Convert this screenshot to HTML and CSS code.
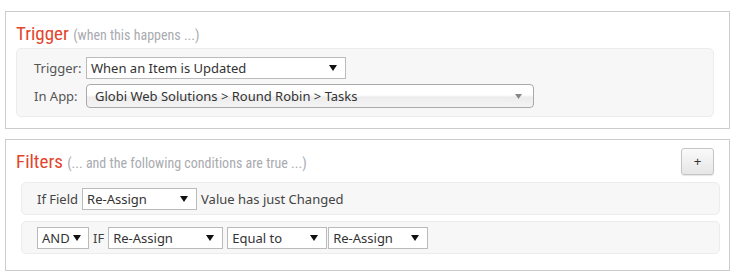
FILE: index.html
```html
<!DOCTYPE html>
<html lang="en">
  <head>
    <meta charset="UTF-8" />
    <title>Trigger and Filters</title>
    <link rel="stylesheet" href="styles.css">
  </head>
  <body>
    <div class="panel">
      <h2 class="panel-title">Trigger <small>(when this happens ...)</small></h2>
      <div class="trigger-box">
        <span class="label">Trigger:</span>
        <div class="select select-trigger">
          <span>When an Item is Updated</span>
          <svg class="caret" width="8" height="6" viewBox="0 0 8 6"><path d="M0 0h8L4 6z" /></svg>
        </div>
        <span class="label">In App:</span>
        <div class="select select-app">
          <span>Globi Web Solutions &gt; Round Robin &gt; Tasks</span>
          <svg class="caret caret-grey" width="7" height="5" viewBox="0 0 7 5"><path d="M0 0h7L3.5 5z" /></svg>
        </div>
      </div>
    </div>

    <div class="panel panel-filters">
      <div class="panel-head">
        <h2 class="panel-title">Filters <small>(... and the following conditions are true ...)</small></h2>
        <button class="btn-add">+</button>
      </div>
      <div class="filter-row">
        <span class="word">If Field</span>
        <div class="select select-field">
          <span>Re-Assign</span>
          <svg class="caret" width="8" height="6" viewBox="0 0 8 6"><path d="M0 0h8L4 6z" /></svg>
        </div>
        <span class="word">Value has just Changed</span>
      </div>
      <div class="filter-row">
        <div class="select select-and">
          <span>AND</span>
          <svg class="caret" width="8" height="6" viewBox="0 0 8 6"><path d="M0 0h8L4 6z" /></svg>
        </div>
        <span class="word">IF</span>
        <div class="select select-field">
          <span>Re-Assign</span>
          <svg class="caret" width="8" height="6" viewBox="0 0 8 6"><path d="M0 0h8L4 6z" /></svg>
        </div>
        <div class="select select-op">
          <span>Equal to</span>
          <svg class="caret" width="8" height="6" viewBox="0 0 8 6"><path d="M0 0h8L4 6z" /></svg>
        </div>
        <div class="select select-value">
          <span>Re-Assign</span>
          <svg class="caret" width="8" height="6" viewBox="0 0 8 6"><path d="M0 0h8L4 6z" /></svg>
        </div>
      </div>
    </div>
  </body>
</html>
```

FILE: styles.css
```css
* {
  box-sizing: border-box;
}

body {
  margin: 0;
  padding: 11px 0 0 5px;
  font-family: "Noto Sans", "Open Sans", sans-serif;
  font-size: 13px;
  color: #444;
  background: #fff;
}

.panel {
  width: 725px;
  height: 118px;
  border: 1px solid #ccc;
  padding: 0 15px 0 10px;
}

.panel-filters {
  margin-top: 10px;
  height: 132px;
}

.panel-title {
  margin: 0;
  padding: 10px 0 1px 0;
  font-family: "Liberation Sans Narrow", "Roboto Condensed", Roboto, sans-serif;
  font-weight: normal;
  font-size: 19px;
  line-height: 24px;
  color: #e3452b;
}

.panel-title small {
  font-size: 14px;
  color: #a9abb0;
}

.trigger-box {
  display: grid;
  grid-template-columns: 52px auto;
  justify-items: start;
  align-items: center;
  row-gap: 5px;
  background: #f7f7f7;
  border: 1px solid #ececec;
  border-radius: 5px;
  padding: 8px 0 8px 17px;
}

.label {
  color: #555;
}

.select {
  display: flex;
  align-items: center;
  justify-content: space-between;
  height: 22px;
  padding: 0 8px 0 4px;
  background: #fff;
  border: 1px solid #bbb;
  color: #333;
  white-space: nowrap;
}

.caret {
  fill: #111;
  flex: none;
}

.caret-grey {
  fill: #888;
}

.select-trigger {
  width: 260px;
}

.select-app {
  width: 448px;
  height: 24px;
  padding: 0 11px 0 8px;
  border: 1px solid #aaa;
  border-radius: 4px;
  background: linear-gradient(#fff 0%, #fff 45%, #ececec 55%, #f4f4f4 100%);
}

.panel-head {
  display: flex;
  justify-content: space-between;
  align-items: flex-start;
}

.panel-filters .panel-title {
  padding: 10px 0 0 0;
}

.btn-add {
  margin-top: 8px;
  width: 33px;
  height: 27px;
  border: 1px solid #c4c4c4;
  border-radius: 3px;
  background: linear-gradient(#fafafa, #e6e6e6);
  box-shadow: 0 1px 1px rgba(0, 0, 0, 0.1);
  font-size: 13px;
  color: #333;
  padding: 0;
}

.filter-row {
  display: flex;
  align-items: center;
  width: 699px;
  margin: 0 0 6px 5px;
  height: 33px;
  padding: 0 15px;
  background: #f7f7f7;
  border: 1px solid #ececec;
  border-radius: 5px;
}

.panel-head + .filter-row {
  margin-top: 7px;
}

.word {
  margin-right: 4px;
}

.select + .word {
  margin-left: 4px;
}

.select-field {
  width: 115px;
}

.select-and {
  width: 52px;
  padding-right: 7px;
}

.select-op,
.select-value {
  width: 100px;
}

.filter-row .select-field + .select-op {
  margin-left: 4px;
}

.select-op + .select-value {
  margin-left: 1px;
}
```
